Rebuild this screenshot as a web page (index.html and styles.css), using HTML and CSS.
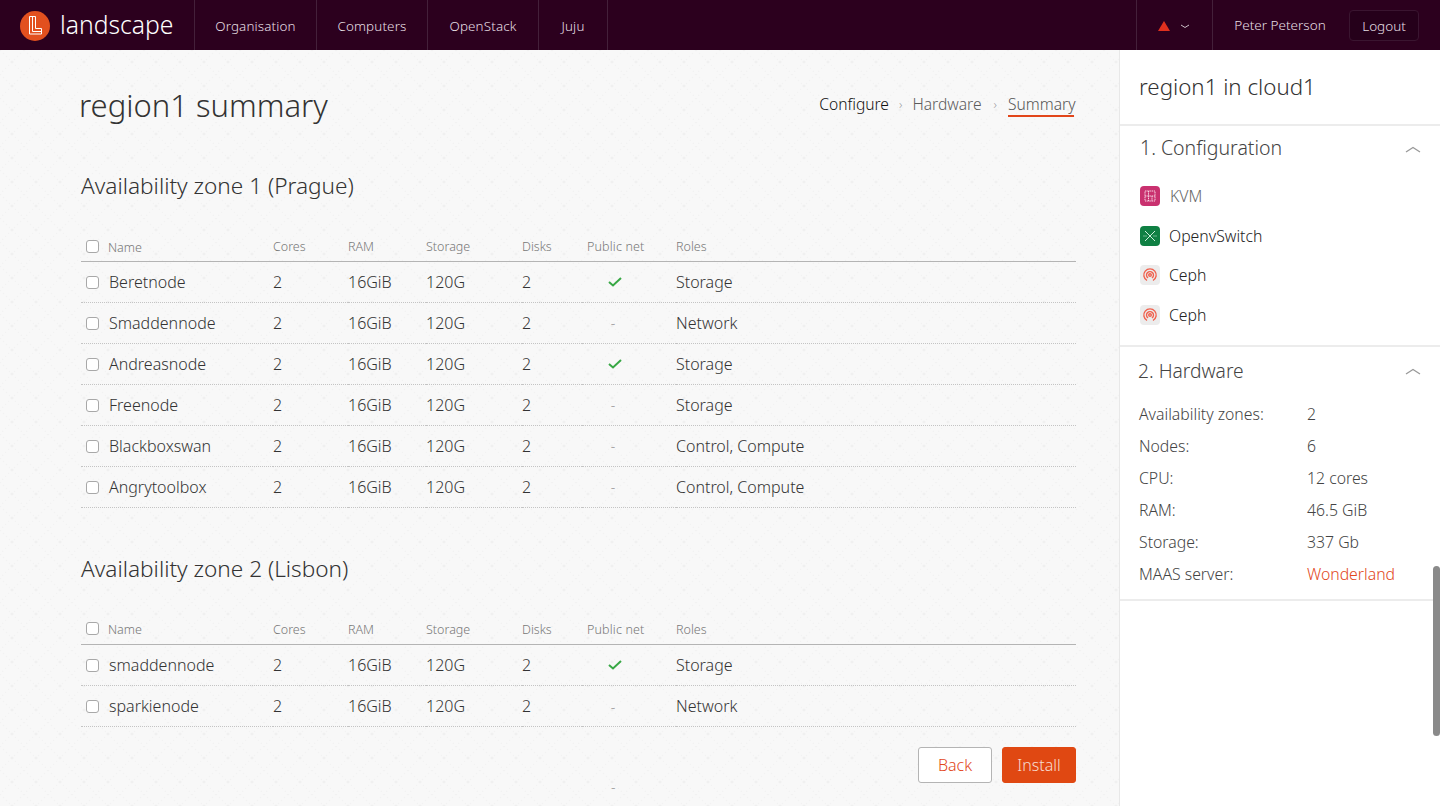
FILE: index.html
```html
<!DOCTYPE html>
<html lang="en">
<head>
    <meta charset="UTF-8">
    <title>region1 summary - Landscape</title>
    <link rel="stylesheet" href="styles.css">
</head>
<body>
    <header class="topbar">
        <a class="brand" href="#">
            <svg class="brand-logo" width="30" height="30" viewBox="0 0 30 30">
                <circle cx="15" cy="15" r="15" fill="#e2501f"/>
                <path d="M9.500 5.500h6v12h6v5.500h-12z" fill="none" stroke="#fff" stroke-width="1"/>
                <path d="M12.500 5.500v15h9" fill="none" stroke="#fff" stroke-width="1"/>
            </svg>
            <span class="brand-name">landscape</span>
        </a>
        <nav class="nav">
            <a class="nav-org" href="#">Organisation</a>
            <a class="nav-mid" href="#">Computers</a>
            <a class="nav-mid" href="#">OpenStack</a>
            <a class="nav-juju" href="#">Juju</a>
        </nav>
        <div class="account">
            <div class="alerts">
                <svg class="alert-icon" width="12" height="10" viewBox="0 0 12 10"><path d="M6 0L12 10H0z" fill="#e0301e"/></svg>
                <svg class="alert-caret" width="10" height="5" viewBox="0 0 10 5"><path d="M1 1l4 2.500L9 1" fill="none" stroke="#cbbfc7" stroke-width="1"/></svg>
            </div>
            <span class="user">Peter Peterson</span>
            <a class="logout" href="#">Logout</a>
        </div>
    </header>

    <div class="page">
        <main class="content">
            <div class="title-row">
                <h1>region1 summary</h1>
                <ol class="steps">
                    <li class="done">Configure</li>
                    <li class="sep">›</li>
                    <li>Hardware</li>
                    <li class="sep">›</li>
                    <li class="current">Summary</li>
                </ol>
            </div>

            <section class="zone">
                <h2>Availability zone 1 (Prague)</h2>
                <table class="nodes">
                    <thead>
                        <tr><th class="c-name"><input type="checkbox"><span>Name</span></th><th class="c-cores">Cores</th><th class="c-ram">RAM</th><th class="c-storage">Storage</th><th class="c-disks">Disks</th><th class="c-net">Public net</th><th>Roles</th></tr>
                    </thead>
                    <tbody>
                        <tr><td class="c-name"><input type="checkbox"><span>Beretnode</span></td><td>2</td><td>16GiB</td><td>120G</td><td>2</td><td class="c-net"><svg class="tick" width="14" height="10" viewBox="0 0 14 10"><path d="M1 5l4 3.500L13 1" fill="none" stroke="#38a845" stroke-width="2"/></svg></td><td>Storage</td></tr>
                        <tr><td class="c-name"><input type="checkbox"><span>Smaddennode</span></td><td>2</td><td>16GiB</td><td>120G</td><td>2</td><td class="c-net dash">-</td><td>Network</td></tr>
                        <tr><td class="c-name"><input type="checkbox"><span>Andreasnode</span></td><td>2</td><td>16GiB</td><td>120G</td><td>2</td><td class="c-net"><svg class="tick" width="14" height="10" viewBox="0 0 14 10"><path d="M1 5l4 3.500L13 1" fill="none" stroke="#38a845" stroke-width="2"/></svg></td><td>Storage</td></tr>
                        <tr><td class="c-name"><input type="checkbox"><span>Freenode</span></td><td>2</td><td>16GiB</td><td>120G</td><td>2</td><td class="c-net dash">-</td><td>Storage</td></tr>
                        <tr><td class="c-name"><input type="checkbox"><span>Blackboxswan</span></td><td>2</td><td>16GiB</td><td>120G</td><td>2</td><td class="c-net dash">-</td><td>Control, Compute</td></tr>
                        <tr><td class="c-name"><input type="checkbox"><span>Angrytoolbox</span></td><td>2</td><td>16GiB</td><td>120G</td><td>2</td><td class="c-net dash">-</td><td>Control, Compute</td></tr>
                    </tbody>
                </table>
            </section>

            <section class="zone">
                <h2>Availability zone 2 (Lisbon)</h2>
                <table class="nodes">
                    <thead>
                        <tr><th class="c-name"><input type="checkbox"><span>Name</span></th><th class="c-cores">Cores</th><th class="c-ram">RAM</th><th class="c-storage">Storage</th><th class="c-disks">Disks</th><th class="c-net">Public net</th><th>Roles</th></tr>
                    </thead>
                    <tbody>
                        <tr><td class="c-name"><input type="checkbox"><span>smaddennode</span></td><td>2</td><td>16GiB</td><td>120G</td><td>2</td><td class="c-net"><svg class="tick" width="14" height="10" viewBox="0 0 14 10"><path d="M1 5l4 3.500L13 1" fill="none" stroke="#38a845" stroke-width="2"/></svg></td><td>Storage</td></tr>
                        <tr><td class="c-name"><input type="checkbox"><span>sparkienode</span></td><td>2</td><td>16GiB</td><td>120G</td><td>2</td><td class="c-net dash">-</td><td>Network</td></tr>
                    </tbody>
                </table>
            </section>

            <div class="actions">
                <button class="btn btn-back">Back</button>
                <button class="btn btn-install">Install</button>
            </div>
            <div class="trailing-dash">-</div>
        </main>

        <aside class="sidebar">
            <h3 class="side-title">region1 in cloud1</h3>

            <section class="side-block block-config">
                <div class="side-head">
                    <h4>1. Configuration</h4>
                    <svg class="chevron" width="16" height="7" viewBox="0 0 16 7"><path d="M1 6l7-4.500L15 6" fill="none" stroke="#999" stroke-width="1.300"/></svg>
                </div>
                <ul class="components">
                    <li class="muted">
                        <svg width="20" height="20" viewBox="0 0 20 20"><rect width="20" height="20" rx="4" fill="#c9316f"/><path d="M5 5h10v10H5zM5 10h10M8.500 5v10M12 10v5" fill="none" stroke="#f7d3e2" stroke-width="1" stroke-dasharray="1.500 .7"/></svg>
                        KVM
                    </li>
                    <li>
                        <svg width="20" height="20" viewBox="0 0 20 20"><rect width="20" height="20" rx="4" fill="#0f8043"/><path d="M5 5l10 10M15 5L5 15" fill="none" stroke="#cdeedb" stroke-width="1"/><path d="M3.500 10h3M13.500 10h3" fill="none" stroke="#cdeedb" stroke-width="1" stroke-dasharray="1 1"/></svg>
                        OpenvSwitch
                    </li>
                    <li>
                        <svg width="20" height="20" viewBox="0 0 20 20"><rect width="20" height="20" rx="4" fill="#ececec"/><g fill="none" stroke="#f0604d" stroke-width="1.400"><path d="M7 15.500a6.200 6.200 0 1 1 6 0"/><path d="M8 13a3.500 3.500 0 1 1 4 0"/><circle cx="10" cy="10" r="1.300"/></g></svg>
                        Ceph
                    </li>
                    <li>
                        <svg width="20" height="20" viewBox="0 0 20 20"><rect width="20" height="20" rx="4" fill="#ececec"/><g fill="none" stroke="#f0604d" stroke-width="1.400"><path d="M7 15.500a6.200 6.200 0 1 1 6 0"/><path d="M8 13a3.500 3.500 0 1 1 4 0"/><circle cx="10" cy="10" r="1.300"/></g></svg>
                        Ceph
                    </li>
                </ul>
            </section>

            <section class="side-block block-hardware">
                <div class="side-head">
                    <h4>2. Hardware</h4>
                    <svg class="chevron" width="16" height="7" viewBox="0 0 16 7"><path d="M1 6l7-4.500L15 6" fill="none" stroke="#999" stroke-width="1.300"/></svg>
                </div>
                <dl class="specs">
                    <dt>Availability zones:</dt><dd>2</dd>
                    <dt>Nodes:</dt><dd>6</dd>
                    <dt>CPU:</dt><dd>12 cores</dd>
                    <dt>RAM:</dt><dd>46.5 GiB</dd>
                    <dt>Storage:</dt><dd>337 Gb</dd>
                    <dt>MAAS server:</dt><dd><a href="#">Wonderland</a></dd>
                </dl>
            </section>
        </aside>
    </div>
    <div class="scroll-thumb"></div>
</body>
</html>
```

FILE: styles.css
```css
* {
    box-sizing: border-box;
}
html, body {
    height: 100%;
}
body {
    margin: 0;
    overflow: hidden;
    font-family: "Noto Sans", "Open Sans", sans-serif;
    font-weight: 300;
    font-size: 16px;
    color: #333;
    background: #fff;
}
a {
    color: inherit;
    text-decoration: none;
}
h1, h2, h3, h4, ul, ol, dl, dd {
    margin: 0;
    padding: 0;
    font-weight: 300;
}
ul, ol {
    list-style: none;
}

/* top bar */
.topbar {
    height: 50px;
    display: flex;
    background: #2c001e;
    color: #e6dfe3;
}
.brand {
    width: 194px;
    padding-left: 20px;
    display: flex;
    align-items: center;
    gap: 10px;
    color: #fff;
}
.brand-logo {
    margin-top: 2px;
}
.brand-name {
    font-size: 24.700px;
    line-height: 50px;
}
.nav {
    display: flex;
    border-left: 1px solid #44203a;
}
.nav a {
    line-height: 52px;
    text-align: center;
    font-size: 13.400px;
    letter-spacing: .15px;
    border-right: 1px solid #44203a;
}
.nav-org {
    width: 122px;
}
.nav-mid {
    width: 111px;
}
.nav-juju {
    width: 69px;
    letter-spacing: 1px;
}
.account {
    margin-left: auto;
    display: flex;
    align-items: center;
}
.alerts {
    width: 77px;
    height: 50px;
    display: flex;
    align-items: center;
    justify-content: center;
    gap: 10px;
    border-left: 1px solid #44203a;
    border-right: 1px solid #44203a;
}
.alert-icon {
    margin-top: 2px;
    margin-left: -2px;
}
.alert-caret {
    margin-top: 3px;
}
.user {
    width: 136px;
    padding-right: 2px;
    text-align: center;
    font-size: 13.500px;
}
.logout {
    width: 70px;
    height: 31px;
    margin-right: 21px;
    line-height: 30px;
    text-align: center;
    font-size: 13.500px;
    border: 1px solid #3a1530;
    border-radius: 4px;
    background: #25001a;
}

/* main column */
.page {
    display: flex;
    height: 756px;
}
.content {
    width: 1120px;
    padding: 0 43px 0 81px;
    border-right: 1px solid #e8e8e8;
    background-color: #f8f8f8;
    background-image: url("data:image/svg+xml,%3Csvg xmlns='http://www.w3.org/2000/svg' width='24' height='24'%3E%3Cpath d='M0 0L24 24M24 0L0 24' stroke='%23f2f2f2' stroke-width='1.200' stroke-dasharray='1.500 2.700'/%3E%3Ccircle cx='12' cy='12' r='1.500' fill='%23f0f0f0'/%3E%3C/svg%3E");
    background-size: 24px 24px;
}
.title-row {
    display: flex;
    justify-content: space-between;
    height: 120px;
}
h1 {
    margin: 34px 0 0 -2px;
    font-size: 31px;
    line-height: 42px;
    color: #333;
}
.steps {
    display: flex;
    gap: 10px;
    margin: 43px 2px 0 0;
    height: 24px;
    font-size: 15.600px;
    line-height: 22px;
    color: #5c5c5c;
}
.steps .done {
    color: #111;
}
.steps .sep {
    color: #999;
    font-size: 13px;
}
.steps .sep:nth-child(4) {
    margin: 0 1px 0 2px;
}
.steps .current {
    width: 66px;
    border-bottom: 2px solid #e2461a;
    white-space: nowrap;
    color: #555;
}

/* zones */
.zone + .zone {
    margin-top: 45px;
}
.zone h2 {
    font-size: 22.600px;
    line-height: 32px;
    height: 62px;
    color: #333;
}
.nodes {
    width: 100%;
    border-collapse: collapse;
    table-layout: fixed;
    font-size: 16px;
}
.nodes th {
    height: 29px;
    padding: 1px 0 0 0;
    text-align: left;
    font-size: 12.500px;
    font-weight: 300;
    color: #777;
    border-bottom: 1px solid #b4b4b4;
}
.zone + .zone .nodes th {
    height: 30px;
    padding-bottom: 1px;
}
.nodes td {
    height: 41px;
    padding: 0;
    border-bottom: 1px dotted #c4c4c4;
}
.c-name {
    width: 192px;
}
.c-cores {
    width: 75px;
}
.c-ram {
    width: 78px;
}
.c-storage {
    width: 96px;
}
.c-disks {
    width: 60px;
}
.nodes th.c-net, .nodes td.c-net {
    width: 94px;
}
.nodes th.c-net {
    padding-left: 5px;
    letter-spacing: .15px;
}
.nodes td.c-net {
    padding-right: 28px;
    text-align: center;
}
.nodes td.dash {
    padding-right: 32px;
    color: #999;
    font-size: 14px;
}
.c-name input {
    width: 13px;
    height: 13px;
    margin: 0 10px 0 5px;
    vertical-align: -1px;
    appearance: none;
    border: 1px solid #a8a8a8;
    border-radius: 3px;
    background: #fff;
}
th.c-name input {
    margin-right: 9px;
    vertical-align: -2px;
}
th.c-name span {
    vertical-align: -1px;
}
.tick {
    vertical-align: 1px;
}

.actions {
    display: flex;
    justify-content: flex-end;
    gap: 10px;
    margin-top: 20px;
}
.btn {
    width: 74px;
    height: 36px;
    padding: 0;
    font: inherit;
    border-radius: 3px;
    border: 1px solid #b4b4b4;
}
.btn-back {
    background: #fff;
    color: #e2461a;
}
.btn-install {
    background: #e04812;
    border-color: #e04812;
    color: #f6dcd0;
}
.trailing-dash {
    margin-top: -5px;
    padding-left: 530px;
    color: #999;
    font-size: 14px;
    line-height: 18px;
}

/* right column */
.sidebar {
    width: 320px;
    background: #fff;
}
.side-title {
    height: 76px;
    padding: 21px 0 0 19px;
    font-size: 22.300px;
    line-height: 31px;
    border-bottom: 2px solid #ececec;
    color: #333;
}
.side-block {
    border-bottom: 2px solid #ececec;
}
.block-config {
    height: 221px;
}
.block-hardware {
    height: 254px;
}
.side-head {
    display: flex;
    justify-content: space-between;
    align-items: center;
    height: 43px;
    padding: 0 19px 0 20px;
}
.block-hardware .side-head {
    height: 47px;
    padding-left: 18px;
}
.side-head h4 {
    font-size: 19.500px;
    color: #444;
}
.block-hardware .side-head h4 {
    font-size: 19.200px;
}
.chevron {
    margin-top: 3px;
}
.block-hardware .chevron {
    margin-top: 1px;
}
.components {
    padding: 7px 0 0 20px;
}
.components li {
    display: flex;
    align-items: center;
    gap: 9px;
    height: 39.800px;
    font-size: 15.800px;
    color: #222;
}
.components .muted {
    gap: 10px;
    color: #666;
}
.specs {
    display: grid;
    grid-template-columns: 168px 1fr;
    grid-auto-rows: 32px;
    padding: 4px 0 0 19px;
    font-size: 15.800px;
    line-height: 32px;
    color: #444;
}
.specs a {
    color: #e2461a;
}

.scroll-thumb {
    position: absolute;
    top: 566px;
    right: 0;
    width: 7px;
    height: 170px;
    border-radius: 4px;
    background: #8a8a8a;
}
```
